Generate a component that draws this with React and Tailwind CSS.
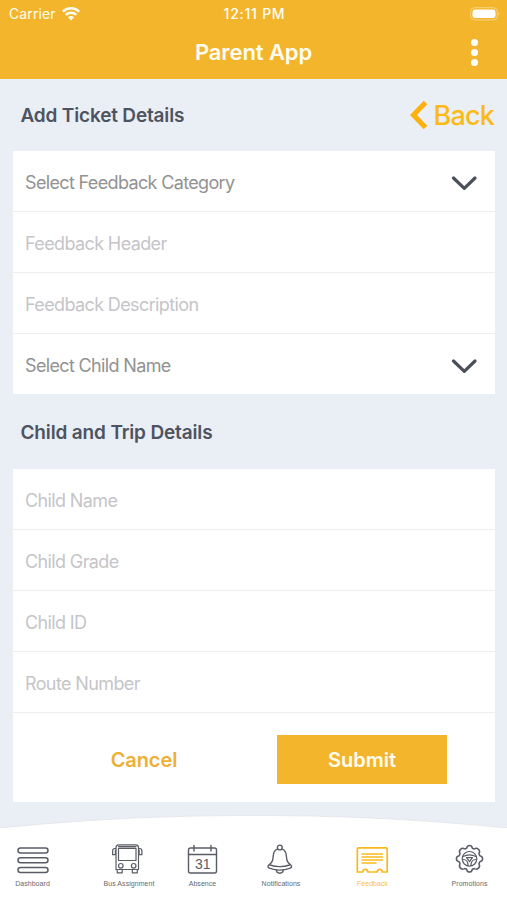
import React from "react";

function WifiIcon() {
  return (
    <svg className="ml-[6px] h-[14px] w-[18px]" viewBox="0 0 18 14" fill="none" stroke="#fffdf2" strokeWidth="2.5">
      <path d="M.9 4.6C5.4.2 12.6.2 17.1 4.6" />
      <path d="M3.7 7.9c2.9-2.8 7.7-2.8 10.6 0" />
      <path d="M6 10.2c1.7-1.6 4.3-1.6 6 0L9 13.5z" fill="#fffdf2" stroke="none" />
    </svg>
  );
}

function Chevron() {
  return (
    <svg className="mt-px h-[16px] w-[26px]" viewBox="0 0 26 16" fill="none" stroke="#4a4f5a" strokeWidth="3.2" strokeLinecap="round" strokeLinejoin="round">
      <path d="M2.5 3 13.3 13.3 24 3" />
    </svg>
  );
}

function Row({ label, select, last }) {
  return (
    <div className={`flex h-[61px] items-center justify-between pr-[18px] pl-[12px] ${last ? "pt-px" : "border-b border-[#eceef2] pt-[2px]"}`}>
      <span className={`text-[18px] ${select ? "tracking-[-0.65px] text-[#929292]" : "tracking-[-0.62px] text-[#c5c5c8]"}`}>{label}</span>
      {select && <Chevron />}
    </div>
  );
}

function Tab({ label, className, labelClass = "text-[#66696f]", children }) {
  return (
    <div className={`flex w-[60px] shrink-0 flex-col items-center ${className}`}>
      <svg className="h-[32px] w-[34px]" viewBox="0 0 34 32" fill="none" strokeWidth="1.2" stroke="#5a5d66" strokeLinecap="round" strokeLinejoin="round">
        {children}
      </svg>
      <span className={`mt-[3px] font-['Liberation_Sans',sans-serif] text-[7px] leading-[10px] tracking-[0.05px] whitespace-nowrap ${labelClass}`}>{label}</span>
    </div>
  );
}

export default function App() {
  return (
    <div className="flex h-[900px] w-[507px] flex-col overflow-hidden bg-[#eaeef5] font-['Inter',sans-serif]">
      <header className="h-[79px] shrink-0 bg-[#f3b52c] text-[#fffdf2]">
        <div className="grid h-[27px] grid-cols-3 items-center pr-[7px] pl-[9px]">
          <div className="flex items-center">
            <span className="text-[14px] tracking-[0.1px]">Carrier</span>
            <WifiIcon />
          </div>
          <span className="text-center text-[14px] font-medium tracking-[0.75px]">12:11 PM</span>
          <svg className="h-[14px] w-[30px] justify-self-end" viewBox="0 0 30 14">
            <rect x=".7" y=".7" width="26.6" height="12.2" rx="4" fill="none" stroke="#fff" strokeOpacity=".4" />
            <rect x="2.5" y="2.5" width="23" height="8.6" rx="2.4" fill="#fff" />
            <path d="M28.6 5q1.6 1.8 0 3.6z" fill="#fff" fillOpacity=".5" />
          </svg>
        </div>
        <div className="grid h-[50px] grid-cols-[1fr_auto_1fr] items-center pr-[29px] pl-[29px]">
          <span />
          <h1 className="text-[22px] font-semibold tracking-[-0.1px]">Parent App</h1>
          <div className="flex flex-col gap-[3px] justify-self-end">
            <i className="size-[7px] rounded-full bg-white" />
            <i className="size-[7px] rounded-full bg-white" />
            <i className="size-[7px] rounded-full bg-white" />
          </div>
        </div>
      </header>

      <div className="flex h-[72px] shrink-0 items-center justify-between pr-[13px] pl-[20.5px]">
        <h2 className="pt-[2px] text-[19px] font-semibold tracking-[-0.17px] text-[#4d535f]">Add Ticket Details</h2>
        <div className="flex items-center text-[#fbba16]">
          <svg className="mr-[5px] h-[30px] w-[19px]" viewBox="0 0 19 30" fill="none" stroke="#fdb10f" strokeWidth="5">
            <path d="M16.5 2.5 4.5 15l12 12.5" />
          </svg>
          <span className="pt-[2px] text-[27px] font-medium tracking-[-0.8px]">Back</span>
        </div>
      </div>

      <section className="mr-[12px] ml-[13px] h-[243px] shrink-0 bg-white">
        <Row label="Select Feedback Category" select />
        <Row label="Feedback Header" />
        <Row label="Feedback Description" />
        <Row label="Select Child Name" select last />
      </section>

      <div className="flex h-[75px] shrink-0 items-center pt-[3px] pl-[20.5px]">
        <h2 className="text-[19px] font-semibold tracking-[-0.15px] text-[#4d535f]">Child and Trip Details</h2>
      </div>

      <section className="mr-[12px] ml-[13px] h-[333px] shrink-0 bg-white">
        <Row label="Child Name" />
        <Row label="Child Grade" />
        <Row label="Child ID" />
        <Row label="Route Number" />
        <div className="flex h-[89px] items-center pt-[4px] pr-[48px] pl-[46px]">
          <button className="h-[49px] w-[170px] text-[20px] font-semibold tracking-[-0.1px] text-[#edb036]">Cancel</button>
          <button className="ml-auto h-[49px] w-[170px] bg-[#f3b52c] text-[20px] font-semibold text-[#fffdf2]">Submit</button>
        </div>
      </section>

      <svg className="mt-[11px] h-[16px] w-[507px] shrink-0" viewBox="0 0 507 16">
        <path d="M0 15C100 5 180 2.5 253 2.5S407 5 507 15v2H0z" fill="#fff" stroke="#e2e4e8" strokeWidth=".8" />
        <path d="M0 16h507v-1H0z" fill="#fff" />
      </svg>
      <nav className="flex flex-1 bg-white pt-[15px]">
        <Tab label="Dashboard" className="ml-[2.5px]">
          <g strokeWidth="1.5">
            <rect x="2" y="3.9" width="30" height="5" rx="2.5" />
            <rect x="2" y="13.7" width="30" height="5" rx="2.5" />
            <rect x="2" y="23.5" width="30" height="5" rx="2.5" />
          </g>
        </Tab>
        <Tab label="Bus Assignment" className="ml-[36.5px]">
          <path d="M4 25.5V3.5Q4 .8 7 .8h16.500q3 0 3 2.700v22z" />
          <path d="M6.500 2.600h17.500M6.500 4.400h17.500v12.100H6.500z" />
          <path d="M4 4.500H2.800Q.6 4.500.6 7v3.700h2.800V6M26.500 4.500h1.200q2.200 0 2.200 2.500v3.700h-2.800V6" />
          <path d="M5.200 25.500v3.300h5v-3.300M20.300 25.500v3.300h5v-3.300" />
          <circle cx="8.800" cy="21.800" r="2.300" />
          <circle cx="21.700" cy="21.800" r="2.300" />
        </Tab>
        <Tab label="Absence" className="ml-[13.500px]">
          <rect x="2.500" y="4" width="28" height="25" rx="2" strokeWidth="1.400" />
          <path d="M2.500 10.500h28M8 1.500v5.500M25 1.500v5.500" strokeWidth="1.400" />
          <text x="16.700" y="25" textAnchor="middle" fontSize="14" fill="#5a5d66" stroke="none" className="font-['Liberation_Sans',sans-serif]">31</text>
        </Tab>
        <Tab label="Notifications" className="ml-[18.500px]">
          <g strokeWidth="1.400">
            <circle cx="15.800" cy="3.500" r="2.400" />
            <path d="M13.400 5.200c-3 1-4 3.500-4.200 7-.2 5-1.500 6.500-4.400 8.800-1.300 1-.8 2.600.6 3.200 6.200 2.300 14.600 2.300 20.800 0 1.400-.6 1.900-2.200.6-3.200-2.900-2.300-4.200-3.800-4.400-8.800-.2-3.500-1.200-6-4.200-7" />
            <path d="M6 21c6 2 13.600 2 19.600 0M12.300 26c.5 4.300 6.500 4.300 7 0" />
          </g>
        </Tab>
        <Tab label="Feedback" className="ml-[31.500px]" labelClass="text-[#fbc335]">
          <g stroke="#f8b91f" strokeWidth="1.700">
            <path d="M3 3.900h27q1.200 0 1.200 1.200v22.900h-5c0-3.600-5-3.600-5 0h-9.400c0-3.600-5-3.600-5 0H1.300V5.200q0-1.300 1.700-1.300z" />
            <path d="M6 10h20.500M6 13h20.500M6 16h20.500M6 19h14" strokeWidth="1.500" />
          </g>
        </Tab>
        <Tab label="Promotions" className="ml-[37px]">
          <g transform="translate(0 .5)">
            <path strokeWidth="1.500" d="M13.700 3.700q.4-2.600 2.800-2.600t2.800 2.600l2 .8q2.200-1.500 4.200.4t.400 4.200l.9 2.100q2.800.4 2.800 3t-2.800 3.100l-.9 2.100q1.600 2.300-.400 4.200t-4.200.400l-2 .8q-.4 2.700-2.800 2.700t-2.800-2.700l-2-.8q-2.200 1.500-4.200-.400t-.400-4.200l-.9-2.100q-2.800-.5-2.800-3.100t2.800-3l.9-2.100q-1.600-2.300.400-4.200t4.200-.4z" />
            <circle cx="16.500" cy="14.300" r="7.300" />
            <path d="M10 12q6.500-3.200 13 0M10 15c3 0 5 2 5 6M23 15c-3 0-5 2-5 6M13.500 13.200h6L16.500 17.200z" />
          </g>
        </Tab>
      </nav>
    </div>
  );
}
